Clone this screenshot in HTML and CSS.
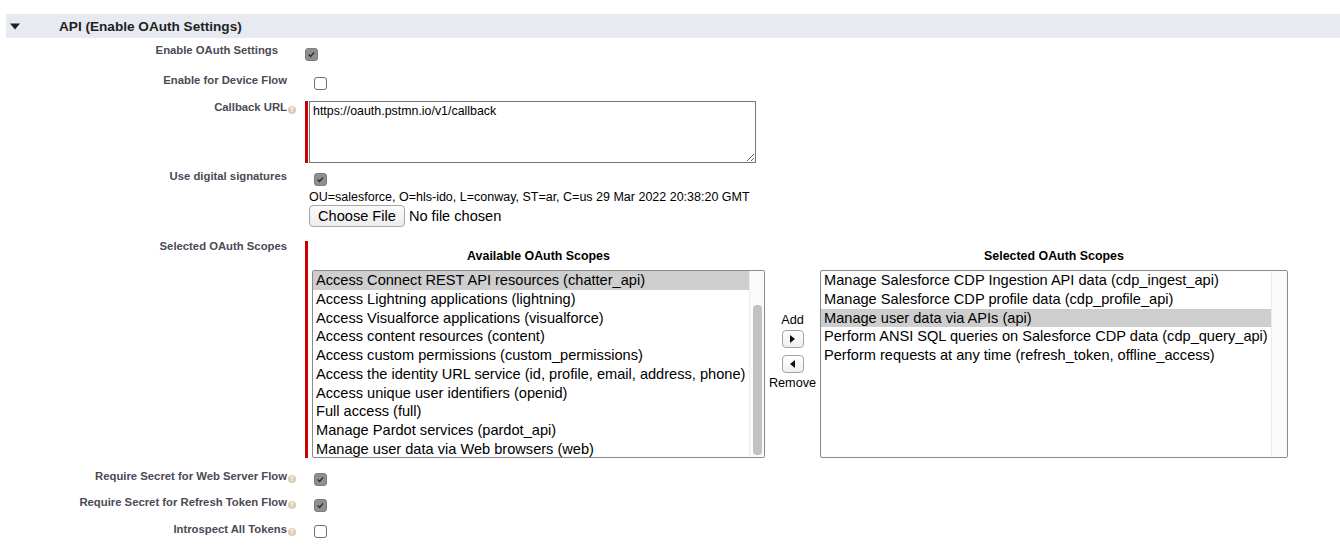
FILE: index.html
```html
<!DOCTYPE html>
<html lang="en">
<head>
<meta charset="utf-8">
<title>API (Enable OAuth Settings)</title>
<link rel="stylesheet" href="styles.css">
</head>
<body>
<div class="page">
  <div class="section-header">
    <svg class="twisty" width="10" height="7" viewBox="0 0 10 7"><polygon points="0,0.5 10,0.5 5,6.5" fill="#1f1f2a"/></svg>
    <h3 class="section-title">API (Enable OAuth Settings)</h3>
  </div>

  <div class="form">
    <div class="row row-first">
      <div class="label label-narrow">Enable OAuth Settings</div>
      <div class="data"><span class="cb checked cb-flush"><svg viewBox="0 0 13 13"><path d="M3.2 6.6 L5.4 8.8 L9.6 4" fill="none" stroke="#2d2d2d" stroke-width="1.7"/></svg></span></div>
    </div>

    <div class="row gap-13">
      <div class="label">Enable for Device Flow</div>
      <div class="data"><span class="cb"></span></div>
    </div>

    <div class="row gap-11">
      <div class="label has-help">Callback URL<span class="help">?</span></div>
      <div class="data">
        <div class="required"><textarea class="callback">https://oauth.pstmn.io/v1/callback</textarea></div>
      </div>
    </div>

    <div class="row gap-7">
      <div class="label">Use digital signatures</div>
      <div class="data">
        <span class="cb checked"><svg viewBox="0 0 13 13"><path d="M3.2 6.6 L5.4 8.8 L9.6 4" fill="none" stroke="#2d2d2d" stroke-width="1.7"/></svg></span>
        <div class="sig-info">
          <div class="cert">OU=salesforce, O=hls-ido, L=conway, ST=ar, C=us 29 Mar 2022 20:38:20 GMT</div>
          <div class="file-row">
            <button class="file-btn" type="button">Choose File</button>
            <span class="file-status">No file chosen</span>
          </div>
        </div>
      </div>
    </div>

    <div class="row gap-13">
      <div class="label">Selected OAuth Scopes</div>
      <div class="data">
        <div class="scopes">
          <div class="scope-head head-left">Available OAuth Scopes</div>
          <div class="scope-head head-right">Selected OAuth Scopes</div>

          <div class="listbox list-left">
            <div class="options">
              <div class="option selected">Access Connect REST API resources (chatter_api)</div>
              <div class="option">Access Lightning applications (lightning)</div>
              <div class="option">Access Visualforce applications (visualforce)</div>
              <div class="option">Access content resources (content)</div>
              <div class="option">Access custom permissions (custom_permissions)</div>
              <div class="option">Access the identity URL service (id, profile, email, address, phone)</div>
              <div class="option">Access unique user identifiers (openid)</div>
              <div class="option">Full access (full)</div>
              <div class="option">Manage Pardot services (pardot_api)</div>
              <div class="option">Manage user data via Web browsers (web)</div>
            </div>
            <div class="scrolltrack track-left"><div class="thumb"></div></div>
          </div>

          <div class="move">
            <span class="move-label">Add</span>
            <button class="move-btn" type="button"><svg width="5" height="8" viewBox="0 0 5 8"><polygon points="0,0 5,4 0,8" fill="#111"/></svg></button>
            <button class="move-btn move-btn-second" type="button"><svg width="5" height="8" viewBox="0 0 5 8"><polygon points="5,0 0,4 5,8" fill="#111"/></svg></button>
            <span class="move-label move-label-bottom">Remove</span>
          </div>

          <div class="listbox list-right">
            <div class="options">
              <div class="option">Manage Salesforce CDP Ingestion API data (cdp_ingest_api)</div>
              <div class="option">Manage Salesforce CDP profile data (cdp_profile_api)</div>
              <div class="option selected">Manage user data via APIs (api)</div>
              <div class="option">Perform ANSI SQL queries on Salesforce CDP data (cdp_query_api)</div>
              <div class="option">Perform requests at any time (refresh_token, offline_access)</div>
            </div>
            <div class="scrolltrack track-right"></div>
          </div>
        </div>
      </div>
    </div>

    <div class="row gap-12">
      <div class="label has-help">Require Secret for Web Server Flow<span class="help">?</span></div>
      <div class="data"><span class="cb checked"><svg viewBox="0 0 13 13"><path d="M3.2 6.6 L5.4 8.8 L9.6 4" fill="none" stroke="#2d2d2d" stroke-width="1.7"/></svg></span></div>
    </div>

    <div class="row gap-10">
      <div class="label has-help">Require Secret for Refresh Token Flow<span class="help">?</span></div>
      <div class="data"><span class="cb checked"><svg viewBox="0 0 13 13"><path d="M3.2 6.6 L5.4 8.8 L9.6 4" fill="none" stroke="#2d2d2d" stroke-width="1.7"/></svg></span></div>
    </div>

    <div class="row gap-11">
      <div class="label has-help">Introspect All Tokens<span class="help">?</span></div>
      <div class="data"><span class="cb cb-up"></span></div>
    </div>
  </div>
</div>
</body>
</html>
```
FILE: styles.css
```css
* { box-sizing: border-box; }

body {
  margin: 0;
  background: #fff;
  color: #000;
  font-family: "Liberation Sans", Arial, Helvetica, sans-serif;
}

.page {
  padding: 14px 0 0 6px;
}

/* section header */
.section-header {
  display: flex;
  align-items: center;
  height: 24px;
  background: #e8eaf1;
}
.twisty {
  display: block;
  margin-left: 4px;
  margin-right: 39px;
}
.section-title {
  margin: 0;
  font-size: 13.6px;
  font-weight: bold;
  color: #1f1f24;
}

/* rows */
.row {
  display: grid;
  grid-template-columns: 299px 1fr;
  align-items: start;
}
.row-first { margin-top: 6px; }
.gap-7 { margin-top: 7px; }
.gap-10 { margin-top: 10px; }
.gap-11 { margin-top: 11px; }
.gap-12 { margin-top: 12px; }
.gap-13 { margin-top: 13px; }

.label {
  font-size: 11.3px;
  line-height: 13px;
  font-weight: bold;
  color: #4a4a56;
  text-align: right;
  padding-right: 18px;
  white-space: nowrap;
}
.label-narrow { padding-right: 27px; }
.label.has-help { padding-right: 9px; }

.help {
  display: inline-block;
  width: 8px;
  height: 8px;
  margin-left: 1px;
  border-radius: 50%;
  background: #dacdb1;
  color: #fff;
  font-size: 7px;
  line-height: 8px;
  text-align: center;
  vertical-align: -1px;
}

/* checkboxes */
.cb {
  display: block;
  width: 13px;
  height: 13px;
  margin: 3px 0 0 9px;
  border: 1px solid #6f6f6f;
  border-radius: 3px;
  background: #fff;
}
.cb svg {
  display: block;
  width: 11px;
  height: 11px;
}
.cb.checked {
  background: #8f8f8f;
  border-color: #7d7d7d;
}
.cb-flush { margin: 4px 0 0 0; }
.cb-up { margin-top: 2px; }

/* callback url */
.required {
  border-left: 3px solid #c00;
  padding-left: 1px;
}
.callback {
  display: block;
  width: 447px;
  height: 62px;
  margin: 0;
  padding: 2px 3px;
  border: 1px solid #767676;
  border-radius: 0;
  font-family: "Liberation Sans", Arial, sans-serif;
  font-size: 12.4px;
  color: #000;
  resize: both;
}

/* digital signatures */
.sig-info { padding-left: 4px; }
.cert {
  margin-top: 4px;
  font-size: 12.5px;
  line-height: 14px;
  white-space: nowrap;
}
.file-row {
  display: flex;
  align-items: center;
  gap: 4px;
  margin-top: 1px;
}
.file-btn {
  height: 22px;
  padding: 0 8px;
  border: 1px solid #a8a8a8;
  border-radius: 4px;
  background: linear-gradient(#fbfbfb, #ececec);
  font-family: "Liberation Sans", Arial, sans-serif;
  font-size: 14.6px;
  color: #000;
}
.file-status { font-size: 14.6px; }

/* scopes */
.scopes {
  margin-top: 1px;
  border-left: 3px solid #c00;
  padding-left: 4px;
  height: 217px;
  display: grid;
  grid-template-columns: 453px 55px 468px;
  grid-template-rows: 29px 188px;
}
.scope-head {
  padding-top: 8px;
  font-size: 12.4px;
  line-height: 15px;
  font-weight: bold;
  text-align: center;
  white-space: nowrap;
}
.head-left { grid-column: 1; grid-row: 1; }
.head-right { grid-column: 3; grid-row: 1; }

.listbox {
  grid-row: 2;
  display: flex;
  height: 188px;
  overflow: hidden;
  border: 1px solid #8a8a8a;
  border-radius: 2px;
  background: #fff;
}
.list-left { grid-column: 1; }
.list-right { grid-column: 3; }

.options {
  flex: 1;
  min-width: 0;
}
.option {
  height: 18.78px;
  line-height: 18px;
  padding-left: 3px;
  font-size: 14.6px;
  white-space: nowrap;
}
.option.selected { background: #cecece; }

.scrolltrack {
  background: #fafafa;
  border-left: 1px solid #ececec;
}
.track-left {
  width: 15px;
  padding: 34px 2px 2px 3px;
}
.track-right { width: 16px; }
.thumb {
  height: 100%;
  border-radius: 4px;
  background: #c2c2c2;
}

.move {
  grid-column: 2;
  grid-row: 2;
  display: flex;
  flex-direction: column;
  align-items: center;
  padding-top: 43px;
}
.move-label {
  font-size: 12.7px;
  line-height: 15px;
}
.move-label-bottom { margin-top: 3px; }
.move-btn {
  display: flex;
  align-items: center;
  justify-content: center;
  width: 22px;
  height: 18px;
  margin-top: 2px;
  padding: 0;
  border: 1px solid #a3a3a3;
  border-radius: 4px;
  background: linear-gradient(#ffffff, #efefef);
}
.move-btn-second { margin-top: 7px; }
```
